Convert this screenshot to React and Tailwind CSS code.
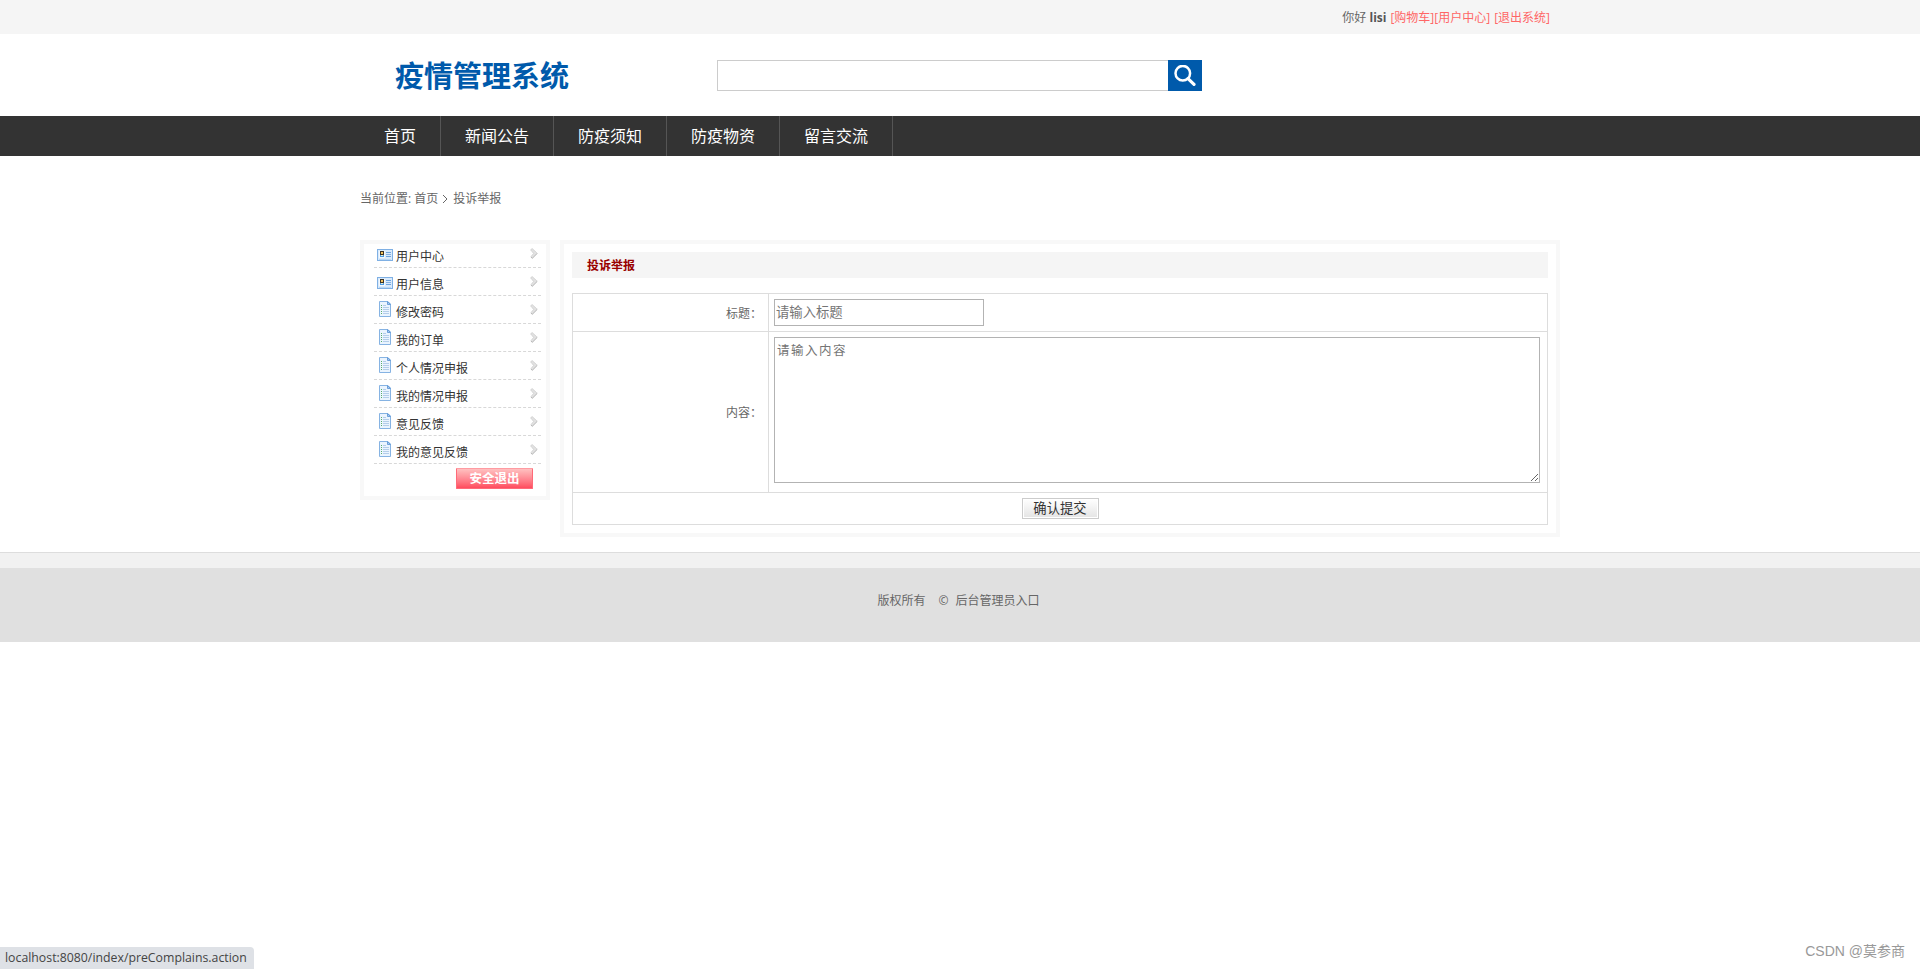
import React from "react";

const navItems = ["首页", "新闻公告", "防疫须知", "防疫物资", "留言交流"];

const menuItems = [
  { label: "用户中心", icon: "card" },
  { label: "用户信息", icon: "card" },
  { label: "修改密码", icon: "doc" },
  { label: "我的订单", icon: "doc" },
  { label: "个人情况申报", icon: "doc" },
  { label: "我的情况申报", icon: "doc" },
  { label: "意见反馈", icon: "doc" },
  { label: "我的意见反馈", icon: "doc" },
];

const CardIcon = () => (
  <svg width="16" height="12" viewBox="0 0 16 12" shapeRendering="crispEdges">
    <rect width="16" height="12" fill="#7fb0e4" />
    <rect x="1" y="1" width="14" height="10" fill="#d8eafc" />
    <rect x="2" y="2" width="6" height="7" fill="#f4f8fc" />
    <rect x="3" y="2" width="4" height="4" fill="#3b3327" />
    <rect x="4" y="3" width="2" height="2" fill="#f3c35c" />
    <rect x="3" y="6" width="4" height="2" fill="#4d9be6" />
    <rect x="4" y="6" width="2" height="1" fill="#e9f3d0" />
    <rect x="9" y="3" width="5" height="1" fill="#6fa3dc" />
    <rect x="9" y="5" width="5" height="1" fill="#84b1e2" />
    <rect x="9" y="7" width="5" height="1" fill="#6fa3dc" />
    <rect x="2" y="10" width="12" height="1" fill="#b9d6f4" />
  </svg>
);

const DocIcon = () => (
  <svg width="12" height="16" viewBox="0 0 12 16">
    <path d="M.5.5h8.5l2.5 2.5v12.5H.5z" fill="#eaf4fe" stroke="#86b3e3" />
    <path d="M8.5.5v3h3z" fill="#a9cbf0" stroke="#6b9fda" />
    <path d="M4 4.5h3M4 6.5h6M4 8.5h6M4 10.5h6M4 12.5h6" stroke="#b4cdea" />
    <path d="M2 4.5h1M2 6.5h1M2 8.5h1M2 10.5h1M2 12.5h1" stroke="#5bb069" />
  </svg>
);

const ArrowIcon = () => (
  <svg width="8" height="11" viewBox="0 0 8 11">
    <path d="M.5 1.8L2.2.5 7.5 5.2 2.4 10.4.6 9 3.6 5.4z" fill="#e2e2e2" />
    <path d="M7.3 5.3L2.4 10.2.9 9.2" fill="none" stroke="#b0b0b0" strokeWidth=".9" />
    <path d="M.6 1.8L2.2.6l4.6 4.2M.6 1.8l3 3.6L1 8.6" fill="none" stroke="#cbcbcb" strokeWidth=".7" />
  </svg>
);

const SearchIcon = () => (
  <svg width="22" height="22" viewBox="0 0 22 22" fill="none" stroke="#fff">
    <circle cx="8.8" cy="8.2" r="7.3" strokeWidth="2.5" />
    <path d="M14 13.6l6 5.8" strokeWidth="3.2" strokeLinecap="round" />
  </svg>
);

const App = () => {
  return (
    <div
      lang="zh-CN"
      className="relative h-[969px] overflow-hidden bg-white font-['Open_Sans','Noto_Sans_CJK_SC',sans-serif] text-xs leading-6 text-[#666]"
    >
      {/* Top bar */}
      <div className="h-[34px] bg-[#f5f5f5]">
        <div className="mx-auto flex h-full w-[1200px] items-center justify-end whitespace-pre pr-2.5 pt-0.5">
          <span>你好 </span>
          <b className="mr-[4px] text-[#555]">lisi</b>
          <a className="text-[#ff6666]">[购物车]</a>
          <a className="mr-[4px] text-[#ff6666]">[用户中心]</a>
          <a className="text-[#ff6666]">[退出系统]</a>
        </div>
      </div>

      {/* Logo and search */}
      <div className="mx-auto flex h-[82px] w-[1200px] items-start">
        <h1 className="ml-[35px] mt-[26px] w-[322px] text-[29px] font-bold leading-[32px] text-[#005aab]">
          疫情管理系统
        </h1>
        <div className="mt-[26px] flex h-[31px]">
          <input className="w-[451px] border border-r-0 border-[#ccc] px-2 outline-none" />
          <button className="flex w-[34px] items-center justify-center bg-[#005aab]">
            <SearchIcon />
          </button>
        </div>
      </div>

      {/* Nav */}
      <div className="h-10 bg-[#333]">
        <ul className="mx-auto flex w-[1200px] text-base leading-10 text-white">
          {navItems.map((item) => (
            <li key={item} className="border-r border-[#555] px-6">
              {item}
            </li>
          ))}
        </ul>
      </div>

      <div className="mx-auto w-[1200px]">
        {/* Breadcrumb */}
        <div className="flex h-[84px] items-center pt-0.5">
          <span>当前位置:</span>
          <span className="ml-[3px]">首页</span>
          <svg className="ml-1 mr-[5px]" width="6" height="10" viewBox="0 0 6 10" fill="none" stroke="#666">
            <path d="M1 1l4 4-4 4" />
          </svg>
          <span>投诉举报</span>
        </div>

        <div className="flex items-start gap-2.5">
          {/* Sidebar */}
          <div className="h-[260px] w-[190px] border-4 border-[#f8f8f8] pl-2.5 pr-[5px]">
            <ul className="-mt-1 text-[#333]">
              {menuItems.map((item) => (
                <li
                  key={item.label}
                  className="flex h-7 items-start border-b border-dashed border-[#d8d8d8] pl-[3px] pr-[3px]"
                >
                  <span className="flex w-4 justify-center">
                    {item.icon === "card" ? (
                      <span className="mt-[9px]"><CardIcon /></span>
                    ) : (
                      <span className="mt-[5px]"><DocIcon /></span>
                    )}
                  </span>
                  <span className="ml-[3px] mt-[5px] flex-1">{item.label}</span>
                  <span className="mt-2"><ArrowIcon /></span>
                </li>
              ))}
            </ul>
            <div className="mt-1 flex justify-end pr-2">
              <button className="h-[21px] w-[77px] rounded-[1px] border border-[#ff6a78] border-t-[#ff9ba2] bg-linear-to-b from-[#ffc0c0] from-0% via-[#ff8590] via-55% to-[#ff4a5e] to-100% text-[12.5px] font-bold leading-[18px] text-white">
                安全退出
              </button>
            </div>
          </div>

          {/* Complaint form */}
          <div className="h-[297px] w-[1000px] border-4 border-[#f8f8f8] p-2">
            <h2 className="h-[26px] bg-[#f5f5f5] pl-[15px] font-bold leading-[28px] text-[#990000]">
              投诉举报
            </h2>
            <div className="mt-[15px] border border-[#ddd]">
              <div className="flex h-[38px] border-b border-[#ddd]">
                <div className="flex w-[196px] items-center justify-end border-r border-[#ddd] pr-1.5 pt-0.5">
                  标题：
                </div>
                <div className="pl-[5px] pt-[5px]">
                  <input
                    placeholder="请输入标题"
                    className="block h-[27px] w-[210px] border border-[#b3b3b3] pb-0.5 pl-px text-[13.33px] leading-5 outline-none placeholder:text-[#757575]"
                  />
                </div>
              </div>
              <div className="flex h-[161px] border-b border-[#ddd]">
                <div className="flex w-[196px] items-center justify-end border-r border-[#ddd] pr-1.5 pt-0.5">
                  内容：
                </div>
                <div className="pl-[5px] pt-[5px]">
                  <textarea
                    placeholder="请输入内容"
                    className="block h-[146px] w-[766px] resize border border-[#b3b3b3] px-0.5 py-px text-[12.5px] leading-6 tracking-[1.5px] outline-none placeholder:text-[#757575]"
                  />
                </div>
              </div>
              <div className="flex h-[31px] items-start justify-center pt-[5px]">
                <button className="h-[21px] w-[77px] border border-[#ccc] bg-linear-to-b from-white to-[#e4e4e4] text-[13.33px] leading-[19px] text-[#333] shadow-[inset_0_0_0_1px_#fff]">
                  确认提交
                </button>
              </div>
            </div>
          </div>
        </div>
      </div>

      {/* Footer */}
      <div className="mt-[15px] h-4 border-t border-[#ddd] bg-[#f1f1f1]" />
      <div className="flex h-[74px] justify-center bg-[#e0e0e0] pr-[3px] pt-[21px]">
        <span>版权所有</span>
        <span className="ml-[13px]">©</span>
        <span className="ml-[7px]">后台管理员入口</span>
      </div>

      {/* Browser status bubble */}
      <div className="absolute bottom-0 left-0 h-[22px] w-[254px] whitespace-nowrap rounded-tr bg-[#dee1e6] pl-[5px] text-[12.3px] leading-[22px] text-[#444]">
        localhost:8080/index/preComplains.action
      </div>
      <div className="absolute bottom-2 right-[15px] whitespace-nowrap font-['Liberation_Sans','Noto_Sans_CJK_SC',sans-serif] text-sm leading-5 text-[#999]">
        CSDN @莫参商
      </div>
    </div>
  );
};

export default App;
